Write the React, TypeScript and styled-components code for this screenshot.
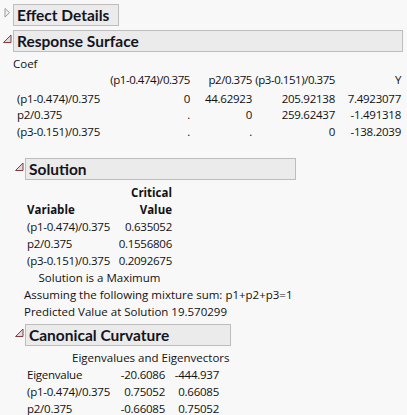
import { Fragment } from "react";
import styled, { createGlobalStyle } from "styled-components";

const GlobalStyle = createGlobalStyle`
  body {
    margin: 0;
    background: #f8f8f8;
    font-family: "Open Sans", "Noto Sans", sans-serif;
    font-size: 11.5px;
    color: #111;
  }
`;

const Page = styled.div`
  padding-top: 4px;
`;

const Outline = styled.div<{ $gap?: number }>`
  margin-top: ${(p) => p.$gap ?? 0}px;
`;

const Header = styled.div`
  display: flex;
  align-items: flex-start;
  height: 22px;
`;

const Toggle = styled.svg`
  width: 13px;
  height: 22px;
  flex-shrink: 0;
`;

const TitleBox = styled.div<{ $width: number }>`
  box-sizing: border-box;
  width: ${(p) => p.$width}px;
  height: 22px;
  border: 1px solid #bdbdbd;
  background: #ebebeb;
  padding-left: 3px;
  font-family: Lato, "Open Sans", sans-serif;
  font-weight: 700;
  font-size: 15.5px;
  line-height: 20px;
  color: #14141e;
  white-space: nowrap;
`;

const Body = styled.div<{ $pt?: number }>`
  padding-left: 12px;
  padding-top: ${(p) => p.$pt ?? 0}px;
`;

const Line = styled.div<{ $indent?: number }>`
  line-height: 17px;
  padding-left: ${(p) => p.$indent ?? 0}px;
  white-space: nowrap;
`;

const Grid = styled.div<{ $cols: string; $indent: number; $lh?: number; $tight?: boolean }>`
  display: grid;
  grid-template-columns: ${(p) => p.$cols};
  padding-left: ${(p) => p.$indent}px;
  line-height: ${(p) => p.$lh ?? 17}px;
  letter-spacing: ${(p) => (p.$tight ? -0.45 : -0.25)}px;
  white-space: nowrap;
`;

const Cell = styled.div<{ $right?: boolean; $bold?: boolean }>`
  text-align: ${(p) => (p.$right ? "right" : "left")};
  font-weight: ${(p) => (p.$bold ? 700 : 400)};
  letter-spacing: ${(p) => (p.$bold ? "0" : "inherit")};
`;

const Centered = styled.div<{ $width: number; $indent: number }>`
  width: ${(p) => p.$width}px;
  margin-left: ${(p) => p.$indent}px;
  text-align: center;
  line-height: 17px;
  white-space: nowrap;
`;

const Closed = () => (
  <Toggle viewBox="0 0 13 22">
    <polygon points="5,4.5 5,13 9.5,8.75" fill="#f2f2f2" stroke="#9a9a9a" strokeWidth="1" />
  </Toggle>
);

const Open = () => (
  <Toggle viewBox="0 0 13 22">
    <polygon points="3.5,12.5 11,12.5 11,5" fill="#dcdcdc" stroke="#8c3c3c" strokeWidth="1" />
  </Toggle>
);

const coefRows = [
  ["(p1-0.474)/0.375", "0", "44.62923", "205.92138", "7.4923077"],
  ["p2/0.375", ".", "0", "259.62437", "-1.491318"],
  ["(p3-0.151)/0.375", ".", ".", "0", "-138.2039"],
];

const solutionRows = [
  ["(p1-0.474)/0.375", "0.635052"],
  ["p2/0.375", "0.1556806"],
  ["(p3-0.151)/0.375", "0.2092675"],
];

const eigenRows = [
  ["Eigenvalue", "-20.6086", "-444.937"],
  ["(p1-0.474)/0.375", "0.75052", "0.66085"],
  ["p2/0.375", "-0.66085", "0.75052"],
];

const coefCols = "88px 85px 62px 83px 66px";

export default function App() {
  return (
    <Page>
      <GlobalStyle />
      <Outline>
        <Header>
          <Closed />
          <TitleBox $width={106}>Effect Details</TitleBox>
        </Header>
      </Outline>

      <Outline $gap={4}>
        <Header>
          <Open />
          <TitleBox $width={390}>Response Surface</TitleBox>
        </Header>
        <Body $pt={3}>
          <Line $indent={1}>Coef</Line>
          <Grid $cols={coefCols} $indent={5} $lh={16.6} $tight>
            <Cell />
            <Cell $right>(p1-0.474)/0.375</Cell>
            <Cell $right>p2/0.375</Cell>
            <Cell $right>(p3-0.151)/0.375</Cell>
            <Cell $right>Y</Cell>
          </Grid>
          <Grid $cols={coefCols} $indent={5} $lh={16.6} style={{ marginTop: 2 }}>
            {coefRows.map((r) =>
              r.map((v, i) => (
                <Cell key={r[0] + i} $right={i > 0}>
                  {v}
                </Cell>
              ))
            )}
          </Grid>

          <Outline $gap={18}>
            <Header>
              <Open />
              <TitleBox $width={271}>Solution</TitleBox>
            </Header>
            <Body $pt={4}>
              <Grid $cols="90px 55px" $indent={3}>
                <Cell />
                <Cell $right $bold>
                  Critical
                </Cell>
                <Cell $bold>Variable</Cell>
                <Cell $right $bold>
                  Value
                </Cell>
                {solutionRows.map((r) => (
                  <Fragment key={r[0]}>
                    <Cell>{r[0]}</Cell>
                    <Cell $right>{r[1]}</Cell>
                  </Fragment>
                ))}
              </Grid>
              <Centered $width={145} $indent={3}>
                Solution is a Maximum
              </Centered>
              <Line>Assuming the following mixture sum: p1+p2+p3=1</Line>
              <Line>Predicted Value at Solution 19.570299</Line>
            </Body>
          </Outline>

          <Outline $gap={4}>
            <Header>
              <Open />
              <TitleBox $width={206}>Canonical Curvature</TitleBox>
            </Header>
            <Body $pt={3}>
              <Line $indent={48}>Eigenvalues and Eigenvectors</Line>
              <Grid $cols="93px 45px 54px" $indent={3}>
                {eigenRows.map((r) =>
                  r.map((v, i) => (
                    <Cell key={r[0] + i} $right={i > 0}>
                      {v}
                    </Cell>
                  ))
                )}
              </Grid>
            </Body>
          </Outline>
        </Body>
      </Outline>
    </Page>
  );
}
